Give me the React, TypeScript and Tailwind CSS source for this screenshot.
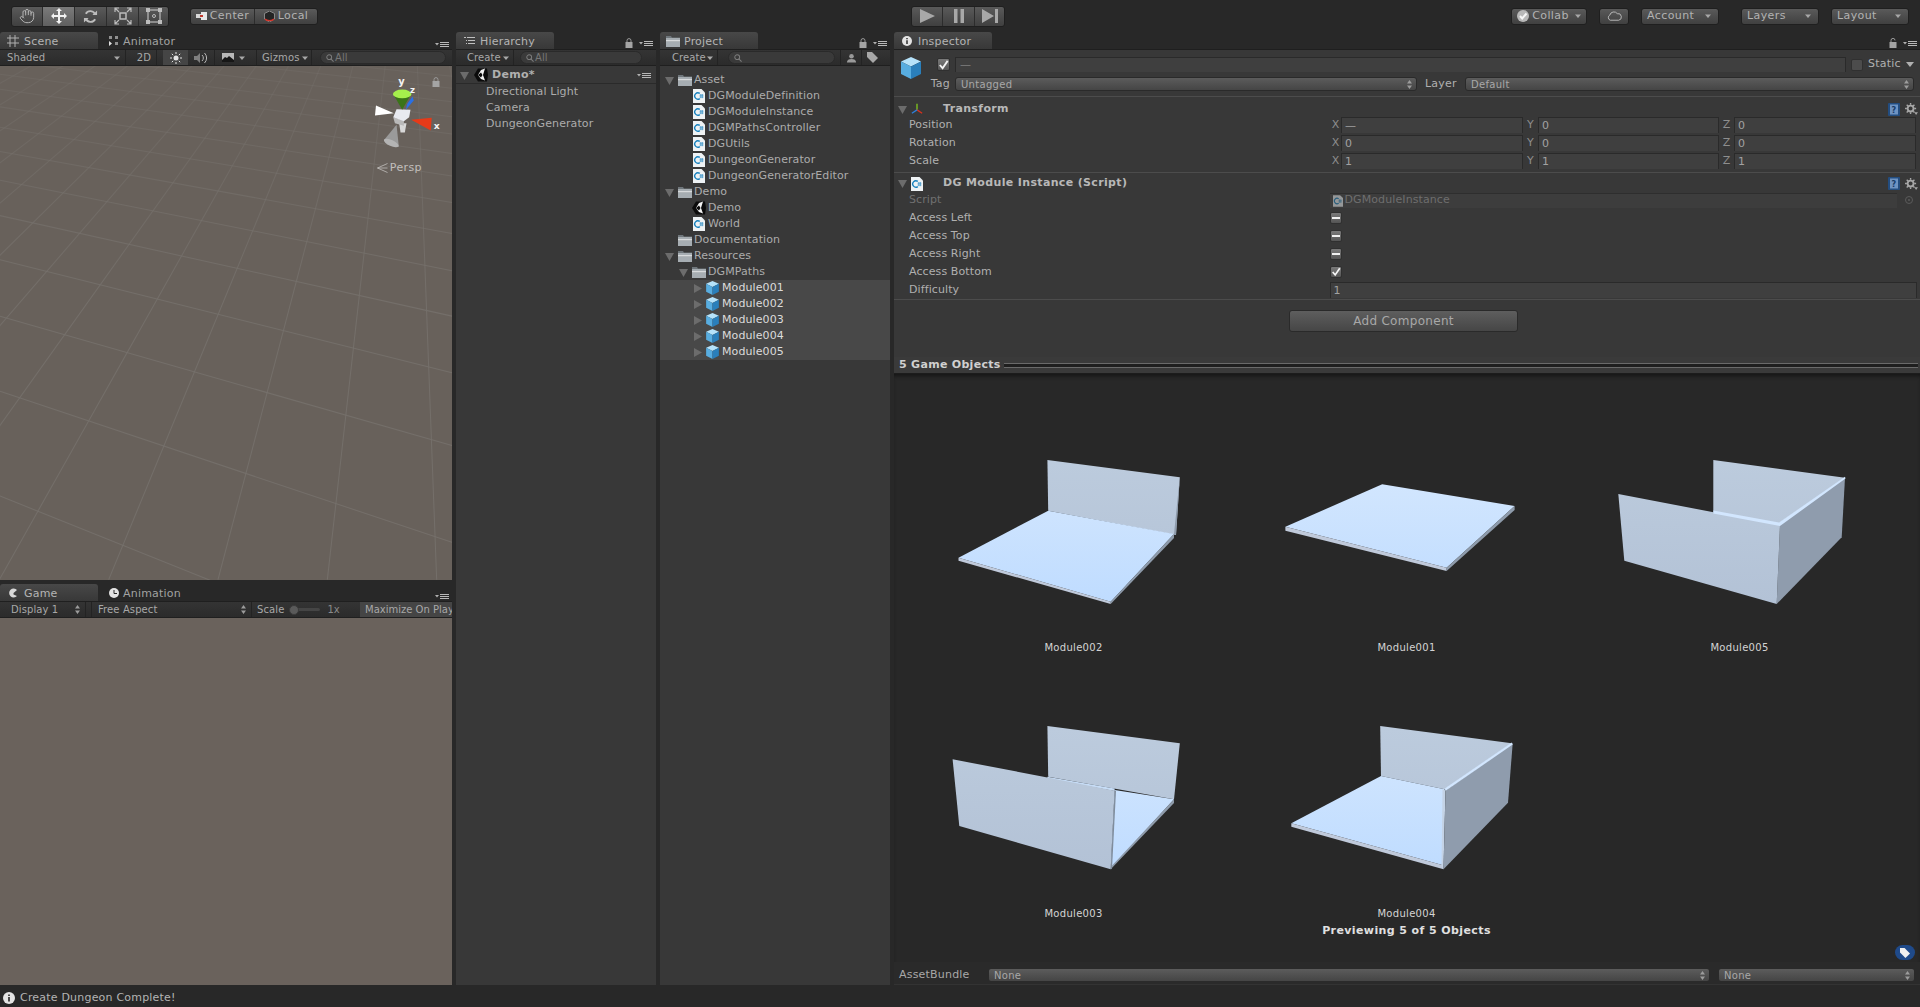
import type { ReactNode } from "react";
import { Hand } from "lucide-react";

const FONT = "font-['DejaVu_Sans',sans-serif]";

// scene grid, two vanishing points, drawn in a 3x space
const VP_A = { x: -4709, y: -572 };
const VP_B = { x: 1228, y: -617 };
const rowLines = Array.from({ length: 26 }, (_, j) => {
  const y0 = 1 / (0.000532 + 0.000105 * j) - 590;
  return { x1: 0, y1: y0, x2: 1356, y2: y0 + ((y0 - VP_A.y) / (0 - VP_A.x)) * 1356 };
});
const colLines = Array.from({ length: 30 }, (_, k) => ({
  x1: 1310 - 328 * (k - 1),
  y1: 1537,
  x2: VP_B.x,
  y2: VP_B.y,
}));

function Arrow({ className = "" }: { className?: string }) {
  return (
    <svg viewBox="0 0 6 4" className={`w-[6px] h-[4px] shrink-0 ${className}`}>
      <path d="M0 0.5h6L3 4z" fill="#a8a8a8" />
    </svg>
  );
}

function UpDown() {
  return (
    <svg viewBox="0 0 5 9" className="w-[5px] h-[9px] shrink-0">
      <path d="M2.5 0L5 3.4H0zM2.5 9L0 5.6h5z" fill="#9c9c9c" />
    </svg>
  );
}

function Caret({ open = true }: { open?: boolean }) {
  return (
    <svg viewBox="0 0 9 9" className="w-[9px] h-[9px] shrink-0">
      <path d={open ? "M0 1h9L4.5 9z" : "M1 0l8 4.5L1 9z"} fill="#6c6c6c" />
    </svg>
  );
}

function MenuIcon() {
  return (
    <svg viewBox="0 0 14 7" className="w-[14px] h-[7px] shrink-0">
      <path d="M0 2h4L2 4.5z" fill="#b0b0b0" />
      <path d="M5 1h9v1H5zM5 3h9v1H5zM5 5h9v1H5z" fill="#b8b8b8" />
    </svg>
  );
}

function Lock({ open = false }: { open?: boolean }) {
  return (
    <svg viewBox="0 0 8 10" className="w-[8px] h-[10px] shrink-0">
      <path d={open ? "M2 4V2.4a2 2 0 0 1 4 0" : "M2 4V2.6a2 2 0 0 1 4 0V4"} fill="none" stroke="#9a9a9a" strokeWidth="1" />
      <rect x="0.5" y="4" width="7" height="6" fill="#a4a4a4" />
    </svg>
  );
}

function CsIcon({ dim = false }: { dim?: boolean }) {
  return (
    <svg viewBox="0 0 12 14" className={`shrink-0 ${dim ? "w-[10px] h-[12px] opacity-50" : "w-[12px] h-[14px]"}`}>
      <path d="M0 0h8.500L12 3.500V14H0z" fill="#eef2f4" />
      <path d="M6.800 4.400a3.200 3.200 0 1 0 0 5.200" fill="none" stroke="#1680bd" strokeWidth="1.400" />
      <path d="M6.500 6.200h4M6.500 8h4M7.800 5v4.200M9.300 5v4.200" stroke="#1680bd" strokeWidth="0.600" />
    </svg>
  );
}

function UnityLogo() {
  return (
    <svg viewBox="0 0 14 14" className="w-[14px] h-[14px] shrink-0">
      <path d="M0 7l4-6.500h9l1 6.500-1 6.500H4z" fill="#0b0b0b" />
      <path d="M4 7l3-5 4-1.500L9 7l2 5.500-4-1.500z" fill="#f2f2f2" />
      <path d="M4 7h4.500L7 4.500zM4 7h4.500L7 9.500z" fill="#0b0b0b" />
    </svg>
  );
}

function Folder() {
  return (
    <svg viewBox="0 0 14 12" className="w-[14px] h-[12px] shrink-0">
      <path d="M0 1h5l1 1.500h8V12H0z" fill="#6f767b" />
      <path d="M0 3h14v2H0zM0 6.500h14V12H0z" fill="#a6adb2" />
      <rect y="5" width="14" height="1.500" fill="#d7dadc" />
    </svg>
  );
}

function Cube({ className = "w-[13px] h-[14px]" }: { className?: string }) {
  return (
    <svg viewBox="0 0 20 22" className={`shrink-0 ${className}`}>
      <path d="M10 0l10 4.500-10 5-10-5z" fill="#b5e2fa" />
      <path d="M0 4.500l10 5V22L0 17z" fill="#58ade0" />
      <path d="M20 4.500l-10 5V22l10-5z" fill="#2a7fbb" />
    </svg>
  );
}

function Help() {
  return (
    <svg viewBox="0 0 12 13" className="w-[12px] h-[13px] shrink-0">
      <rect width="12" height="13" rx="1" fill="#234d80" />
      <rect x="2" y="1.500" width="8" height="10" fill="#6e93c2" />
      <text x="6" y="9.500" textAnchor="middle" fontSize="8" fontWeight="700" fill="#173c69" fontFamily="DejaVu Sans">?</text>
    </svg>
  );
}

function Gear() {
  return (
    <svg viewBox="0 0 14 13" className="w-[13px] h-[12px] shrink-0">
      <circle cx="6" cy="6" r="3.200" fill="none" stroke="#a8a8a8" strokeWidth="2" />
      <path d="M6 0v12M0 6h12M1.800 1.800l8.400 8.400M10.200 1.800l-8.400 8.400" stroke="#a8a8a8" strokeWidth="1.500" strokeDasharray="2 8" />
      <path d="M10 10h4l-2 3z" fill="#a8a8a8" />
    </svg>
  );
}

function Tab({ icon, label, active = false }: { icon: ReactNode; label: string; active?: boolean }) {
  return (
    <div
      className={`w-[98px] h-[17px] flex items-center rounded-t-[3px] text-[11px] tracking-[0.2px] ${
        active ? "bg-gradient-to-b from-[#484848] to-[#383838] text-[#b4b4b4] pl-[7px] gap-[5px]" : "text-[#a2a2a2] pl-[10px] gap-[3px]"
      }`}
    >
      <span className="w-[12px] flex justify-center">{icon}</span>
      <span className="pt-[3px]">{label}</span>
    </div>
  );
}

function TabRow({ children, lock = false, openLock = false }: { children: ReactNode; lock?: boolean; openLock?: boolean }) {
  return (
    <div className="h-[17px] flex items-end bg-[#282828] shrink-0">
      {children}
      <div className="ml-auto flex items-center gap-[6px] pr-[3px] pb-[1px]">
        {lock && <Lock open={openLock} />}
        <MenuIcon />
      </div>
    </div>
  );
}

function Strip({ children }: { children: ReactNode }) {
  return (
    <div className="h-[17px] shrink-0 flex items-center bg-gradient-to-b from-[#343434] to-[#2b2b2b] border-y border-[#1f1f1f] text-[10px] tracking-[0.1px] text-[#a8a8a8] overflow-hidden">
      {children}
    </div>
  );
}

function Search({ className, text }: { className: string; text?: string }) {
  return (
    <div className={`h-[13px] rounded-full bg-[#3a3a3a] border border-[#2a2a2a] flex items-center pl-[5px] gap-[1px] text-[#767676] text-[10px] ${className}`}>
      <svg viewBox="0 0 10 10" className="w-[8px] h-[8px] shrink-0">
        <circle cx="4" cy="4" r="3" fill="none" stroke="#7c7c7c" strokeWidth="1.300" />
        <path d="M6 6l3.500 3.500" stroke="#7c7c7c" strokeWidth="1.300" />
      </svg>
      {text && <span>{text}</span>}
    </div>
  );
}

function TreeRow({ depth, caret, icon, label, selected = false }: { depth: number; caret?: "open" | "closed"; icon: ReactNode; label: string; selected?: boolean }) {
  return (
    <div className={`h-[16px] flex items-center text-[11px] tracking-[0.1px] whitespace-nowrap ${selected ? "bg-[#484848] text-[#dcdcdc]" : "text-[#acacac]"}`}>
      <span className="w-[11px] flex justify-center shrink-0" style={{ marginLeft: depth * 14 + 4 }}>
        {caret && <Caret open={caret === "open"} />}
      </span>
      <span className="w-[17px] ml-[1px] flex justify-center shrink-0">{icon}</span>
      <span className="ml-[1px] pt-[1px]">{label}</span>
    </div>
  );
}

function TopButton({ children, className }: { children: ReactNode; className: string }) {
  return (
    <div className={`h-[17px] flex items-center rounded-[3px] border border-[#1f1f1f] bg-gradient-to-b from-[#5a5a5a] to-[#404040] text-[11px] tracking-[0.4px] text-[#b2b2b2] ${className}`}>
      {children}
    </div>
  );
}

function Vec({ axis, value, className }: { axis: string; value: string; className: string }) {
  return (
    <>
      <span className={`text-[#8e8e8e] text-center ${axis === "X" ? "w-[11px]" : "w-[15px]"}`}>{axis}</span>
      <div className={`h-[16px] border-t border-x border-[#2a2a2a] bg-[#3f3f3f] pl-[3px] leading-[15px] text-[#a2a2a2] ${className}`}>{value}</div>
    </>
  );
}

function VecRow({ label, x }: { label: string; x: string }) {
  const y = label === "Scale" ? "1" : "0";
  return (
    <div className="h-[18px] flex items-center pl-[15px] text-[11px] tracking-[0.1px] text-[#b0b0b0]">
      <span className="w-[421px]">{label}</span>
      <Vec axis="X" value={x} className="w-[182px]" />
      <Vec axis="Y" value={y} className="w-[181px]" />
      <Vec axis="Z" value={y} className="w-[182px]" />
    </div>
  );
}

function Toggle({ label, checked = false }: { label: string; checked?: boolean }) {
  return (
    <div className="h-[18px] flex items-center pl-[15px] text-[11px] tracking-[0.1px] text-[#b0b0b0]">
      <span className="w-[421px]">{label}</span>
      <div className="w-[12px] h-[12px] rounded-[2px] bg-gradient-to-b from-[#7a7a7a] to-[#555555] border border-[#303030] flex items-center justify-center">
        {checked ? (
          <svg viewBox="0 0 12 12" className="w-[12px] h-[12px]">
            <path d="M2 6l3 3.500L10.500 1.500" fill="none" stroke="#f4f4f4" strokeWidth="2" />
          </svg>
        ) : (
          <span className="w-[8px] h-[2px] bg-[#f0f0f0]" />
        )}
      </div>
    </div>
  );
}

function CompHeader({ icon, title, compact = false }: { icon: ReactNode; title: string; compact?: boolean }) {
  return (
    <div className={`flex items-center pl-[4px] pr-[2px] text-[11px] font-bold tracking-[0.35px] text-[#b8b8b8] ${compact ? "h-[18px] pt-[3px]" : "h-[19px] pt-[5px]"}`}>
      <Caret />
      <span className="w-[12px] ml-[4px] flex justify-center">{icon}</span>
      <span className="ml-[20px]">{title}</span>
      <span className="ml-auto flex items-center gap-[5px]">
        <Help />
        <Gear />
      </span>
    </div>
  );
}

function Select({ label, className }: { label: string; className: string }) {
  return (
    <div className={`h-[14px] flex items-center justify-between rounded-[3px] border border-[#2a2a2a] bg-gradient-to-b from-[#5c5c5c] to-[#454545] pl-[5px] pr-[4px] text-[10px] tracking-[0.3px] text-[#a8a8a8] ${className}`}>
      <span>{label}</span>
      <UpDown />
    </div>
  );
}

const FLOOR = "url(#floor)";
const WALL = "url(#wall)";

function Shape({ n }: { n: 1 | 2 | 3 | 4 | 5 }) {
  return (
    <svg viewBox="0 9 333 248" className="w-[333px] h-[248px] block">
      <defs>
        <linearGradient id="floor" gradientUnits="userSpaceOnUse" x1="0" y1="100" x2="0" y2="220">
          <stop offset="0" stopColor="#d2e6fe" />
          <stop offset="1" stopColor="#bfdcff" />
        </linearGradient>
        <linearGradient id="wall" gradientUnits="userSpaceOnUse" x1="0" y1="80" x2="0" y2="220">
          <stop offset="0" stopColor="#bccbdd" />
          <stop offset="1" stopColor="#b3c2d6" />
        </linearGradient>
      </defs>
      {n === 1 && (
        <>
          <polygon points="142.200,102.300 274.600,124 206.600,185.700 45.400,144.700" fill={FLOOR} />
          <polygon points="45.400,144.700 206.600,185.700 206.600,189 45.400,148.700" fill="#c0cadb" />
          <polygon points="274.600,124 274.600,128 206.600,189 206.600,185.700" fill="#8e9bab" />
        </>
      )}
      {n === 2 && (
        <>
          <polygon points="140.400,78 272.800,95.300 269,153 141.200,128.700" fill={WALL} />
          <polygon points="272.800,95.300 269,153 267,152" fill="#8e9bab" />
          <polygon points="141.200,128.700 267,152 203.700,219.700 51.500,175.700" fill={FLOOR} />
          <polygon points="51.500,175.700 203.700,219.700 203.700,222 51.500,178.700" fill="#c0cadb" />
          <polygon points="267,152 267,156 203.700,222 203.700,219.700" fill="#8e9bab" />
        </>
      )}
      {n === 3 && (
        <>
          <polygon points="140.400,78 272.800,95.300 267,151.300 141.200,128.700" fill={WALL} />
          <polygon points="207.600,142 267,151.300 203.700,220.300" fill={FLOOR} />
          <polygon points="267,151.300 267,155 203.700,221.300 203.700,219" fill="#8e9bab" />
          <polygon points="140.400,128.700 207.600,140.500 207.600,143 140.400,131" fill="#c6dcf6" />
          <polygon points="45.600,111.300 140.400,129.500 207.600,142.700 203.700,221.300 52.300,178" fill={WALL} />
          <polygon points="207.600,142.700 209,142.700 205,221 203.700,221.300" fill="#7f8c9c" />
        </>
      )}
      {n === 4 && (
        <>
          <polygon points="140.200,78 271.800,95.300 204.700,141.300 141,128" fill={WALL} />
          <polygon points="141,128 204.700,141.300 202.300,217 51.300,175.300" fill={FLOOR} />
          <polygon points="51.300,175.300 202.300,217 203.500,221.300 51.300,178.700" fill="#c0cadb" />
          <polygon points="202.500,141 205.500,142.700 203.500,221.300 201.500,218" fill="#c4d3e6" />
          <polygon points="205.500,142.700 272.700,95.300 268,154.700 203.500,221.300" fill="#8f9cad" />
          <polygon points="204.700,140.500 271.800,94.500 272.700,96.500 205.500,143" fill="#d2e6fe" />
        </>
      )}
      {n === 5 && (
        <>
          <polygon points="140.300,78 272,95.700 206,141.300 140.300,129.700" fill={WALL} />
          <polygon points="207,143 272,95.700 268.700,155.300 203.700,222" fill="#8f9cad" />
          <polygon points="45.300,112 207,143 203.700,222 51.300,178.700" fill={WALL} />
          <polygon points="140.300,128.500 206,140.500 272,94.800 272.500,96.500 207,144 140.300,131.500" fill="#d2e6fe" />
        </>
      )}
    </svg>
  );
}

function Preview({ n, name }: { n: 1 | 2 | 3 | 4 | 5; name: string }) {
  return (
    <div className="h-[266px]">
      <Shape n={n} />
      <div className="h-[16px] flex items-center justify-center text-[10px] tracking-[0.3px] text-[#d4d4d4]">{name}</div>
    </div>
  );
}

function Gizmo() {
  return (
    <svg viewBox="60 40 220 260" className="absolute top-[7px] right-[9px] w-[73px] h-[87px]">
      <polygon points="140,195 103,240 147,262" fill="#9a9a9a" />
      <ellipse cx="124" cy="250" rx="24" ry="9" transform="rotate(24 124 250)" fill="#b4b4b4" />
      <polygon points="148,190 170,190 165,218 152,218" fill="#d8d8d8" />
      <polygon points="130,172 162,182 162,198 135,190" fill="#b9b9b9" />
      <polygon points="140,148 182,150 178,172 162,184 130,172" fill="#e8eaf0" />
      <polygon points="78,137 132,160 75,167" fill="#ffffff" />
      <polygon points="172,132 188,110 192,122 168,150" fill="#2a70e4" />
      <polygon points="132,106 182,106 157,150" fill="#3a7418" />
      <ellipse cx="157" cy="102" rx="28" ry="13" fill="#a6f04c" />
      <polygon points="184,180 246,174 243,212" fill="#e63a18" />
      <text x="155" y="76" textAnchor="middle" fontSize="30" fontWeight="700" fill="#f4f4f4" fontFamily="DejaVu Sans">y</text>
      <text x="188" y="100" textAnchor="middle" fontSize="26" fontWeight="700" fill="#f4f4f4" fontFamily="DejaVu Sans">z</text>
      <text x="261" y="207" textAnchor="middle" fontSize="28" fontWeight="700" fill="#f4f4f4" fontFamily="DejaVu Sans">x</text>
    </svg>
  );
}

export default function App() {
  return (
    <div className={`w-[1920px] h-[1007px] flex flex-col bg-[#282828] overflow-hidden ${FONT}`}>
      {/* top toolbar */}
      <div className="h-[32px] shrink-0 flex items-center pl-[11px] pr-[11px]">
        <div className="flex w-[158px] h-[21px] rounded-[3px] border border-[#1f1f1f] overflow-hidden bg-gradient-to-b from-[#5a5a5a] to-[#404040]">
          <div className="w-[31px] flex items-center justify-center border-r border-[#2c2c2c]">
            <Hand size={16} color="#b4b4b4" strokeWidth={1.500} />
          </div>
          <div className="w-[32px] flex items-center justify-center border-r border-[#2c2c2c] bg-gradient-to-b from-[#7a7a7a] to-[#606060]">
            <svg viewBox="0 0 16 16" className="w-[16px] h-[16px]">
              <path d="M8 0l3 3H9v4h4V5l3 3-3 3V9H9v4h2l-3 3-3-3h2V9H3v2L0 8l3-3v2h4V3H5z" fill="#f2f2f2" />
            </svg>
          </div>
          <div className="w-[32px] flex items-center justify-center border-r border-[#2c2c2c]">
            <svg viewBox="0 0 16 16" className="w-[15px] h-[15px]">
              <path d="M13 6a5.500 5.500 0 0 0-10-1M3 10a5.500 5.500 0 0 0 10 1" fill="none" stroke="#bcbcbc" strokeWidth="2" />
              <path d="M10 6.500h5V1.500zM6 9.500H1v5z" fill="#bcbcbc" />
            </svg>
          </div>
          <div className="w-[32px] flex items-center justify-center border-r border-[#2c2c2c]">
            <svg viewBox="0 0 18 18" className="w-[18px] h-[18px]">
              <rect x="6" y="6" width="6" height="6" fill="none" stroke="#bcbcbc" strokeWidth="1.500" />
              <path d="M1 5V1h4M13 1h4v4M17 13v4h-4M5 17H1v-4M1.500 1.500L5 5M16.500 1.500L13 5M16.500 16.500L13 13M1.500 16.500L5 13" fill="none" stroke="#bcbcbc" strokeWidth="1.200" />
            </svg>
          </div>
          <div className="flex-1 flex items-center justify-center">
            <svg viewBox="0 0 16 16" className="w-[16px] h-[16px]">
              <rect x="2" y="2" width="12" height="12" fill="none" stroke="#bcbcbc" strokeWidth="1.200" />
              <path d="M0 0h4v4H0zM12 0h4v4h-4zM0 12h4v4H0zM12 12h4v4h-4z" fill="#bcbcbc" />
              <circle cx="8" cy="8" r="1.500" fill="none" stroke="#bcbcbc" />
            </svg>
          </div>
        </div>

        <TopButton className="ml-[21px] w-[128px]">
          <div className="w-[64px] flex items-center justify-center gap-[3px] border-r border-[#2c2c2c] h-full">
            <svg viewBox="0 0 11 8" className="w-[11px] h-[8px]">
              <rect y="2" width="5" height="4" fill="#d8d8d8" />
              <rect x="5" width="6" height="8" fill="#e8e8e8" />
              <rect x="4" y="3" width="3" height="2" fill="#c4392c" />
            </svg>
            <span>Center</span>
          </div>
          <div className="flex-1 flex items-center justify-center gap-[3px]">
            <svg viewBox="0 0 11 11" className="w-[11px] h-[11px]">
              <path d="M5.500 0L10.500 2.500V8L5.500 11 .5 8V2.500z" fill="#242424" stroke="#9a9a9a" strokeWidth="0.800" />
              <path d="M1 8a5 3 0 0 0 9 0" fill="none" stroke="#d0362c" strokeWidth="1.200" />
            </svg>
            <span>Local</span>
          </div>
        </TopButton>

        <div className="ml-[593px] flex w-[94px] h-[21px] rounded-[3px] border border-[#1f1f1f] overflow-hidden bg-gradient-to-b from-[#5a5a5a] to-[#404040]">
          <div className="w-[31px] flex items-center justify-center border-r border-[#2c2c2c]">
            <svg viewBox="0 0 15 14" className="w-[15px] h-[14px]"><path d="M0 0l15 7-15 7z" fill="#a8a8a8" /></svg>
          </div>
          <div className="w-[32px] flex items-center justify-center border-r border-[#2c2c2c]">
            <svg viewBox="0 0 10 14" className="w-[10px] h-[14px]"><path d="M0 0h3.500v14H0zM6.500 0H10v14H6.500z" fill="#a8a8a8" /></svg>
          </div>
          <div className="flex-1 flex items-center justify-center">
            <svg viewBox="0 0 16 14" className="w-[16px] h-[14px]"><path d="M0 0l12 7-12 7zM13 0h3v14h-3z" fill="#a8a8a8" /></svg>
          </div>
        </div>

        <TopButton className="ml-auto w-[76px] justify-center gap-[3px]">
          <svg viewBox="0 0 12 12" className="w-[12px] h-[12px]">
            <circle cx="6" cy="6" r="6" fill="#b8b8b8" />
            <path d="M3 6l2.200 2.500L9.500 3.500" fill="none" stroke="#f6f6f6" strokeWidth="2" />
          </svg>
          <span>Collab</span>
          <Arrow className="ml-[3px]" />
        </TopButton>
        <TopButton className="ml-[12px] w-[30px] justify-center">
          <svg viewBox="0 0 16 10" className="w-[15px] h-[10px]">
            <path d="M3.500 9.500a3 3 0 0 1-.5-5.500 4.500 4.500 0 0 1 8-1.500 3.500 3.500 0 0 1 1.500 7z" fill="none" stroke="#bcbcbc" />
          </svg>
        </TopButton>
        <TopButton className="ml-[12px] w-[78px] justify-between pl-[5px] pr-[7px]">
          <span>Account</span>
          <Arrow />
        </TopButton>
        <TopButton className="ml-[22px] w-[78px] justify-between pl-[5px] pr-[7px]">
          <span>Layers</span>
          <Arrow />
        </TopButton>
        <TopButton className="ml-[12px] w-[78px] justify-between pl-[5px] pr-[7px]">
          <span>Layout</span>
          <Arrow />
        </TopButton>
      </div>

      <div className="flex-1 min-h-0 flex gap-[4px]">
        {/* scene and game */}
        <div className="w-[452px] flex flex-col">
          <TabRow>
            <Tab
              active
              label="Scene"
              icon={
                <svg viewBox="0 0 12 12" className="w-[12px] h-[12px]">
                  <path d="M3 0v12M8 0v12M0 3h12M0 8h12" stroke="#b0b0b0" />
                </svg>
              }
            />
            <Tab
              label="Animator"
              icon={
                <svg viewBox="0 0 10 10" className="w-[10px] h-[10px]">
                  <path d="M0 0h3v3H0zM6 0h3v3H6zM6 6h3v3H6z" fill="#909090" />
                  <path d="M0 5l3 2.500L0 10z" fill="#e0e0e0" />
                </svg>
              }
            />
          </TabRow>
          <Strip>
            <div className="w-[126px] pl-[7px] pr-[5px] flex items-center justify-between border-r border-[#232323] h-full">
              <span>Shaded</span>
              <Arrow />
            </div>
            <div className="w-[31px] text-center pl-[6px] border-r border-[#232323] h-full leading-[15px]">2D</div>
            <div className="w-[25px] ml-[6px] h-full bg-[#454545] flex items-center justify-center">
              <svg viewBox="0 0 12 12" className="w-[12px] h-[12px]">
                <circle cx="6" cy="6" r="2.500" fill="#e4e4e4" />
                <path d="M6 0v2M6 10v2M0 6h2M10 6h2M1.800 1.800l1.400 1.400M8.800 8.800l1.400 1.400M10.200 1.800L8.800 3.200M3.200 8.800l-1.400 1.400" stroke="#e4e4e4" />
              </svg>
            </div>
            <div className="w-[27px] h-full flex items-center justify-center border-r border-[#232323]">
              <svg viewBox="0 0 14 12" className="w-[14px] h-[12px]">
                <path d="M0 4h3l3-3v10L3 8H0z" fill="#7e7e7e" />
                <path d="M8 3a4 4 0 0 1 0 6M10.500 1a7 7 0 0 1 0 10" fill="none" stroke="#b8b8b8" />
              </svg>
            </div>
            <div className="w-[42px] h-full flex items-center pl-[7px] gap-[5px] border-r border-[#232323]">
              <svg viewBox="0 0 12 9" className="w-[12px] h-[9px]">
                <rect width="12" height="9" fill="#b8b8b8" />
                <path d="M0 9V7l3-3 2 1 2-2 5 4v2z" fill="#171717" />
              </svg>
              <Arrow />
            </div>
            <div className="w-[55px] h-full flex items-center justify-between pl-[5px] pr-[3px] border-r border-[#232323]">
              <span>Gizmos</span>
              <Arrow />
            </div>
            <Search className="ml-[8px] w-[126px]" text="All" />
          </Strip>
          <div className="h-[514px] shrink-0 relative bg-[#68615b] overflow-hidden">
            <svg viewBox="0 18 1356 1520" preserveAspectRatio="none" className="w-full h-full block">
              <defs>
                <linearGradient id="gridFade" gradientUnits="userSpaceOnUse" x1="0" y1="0" x2="0" y2="700">
                  <stop offset="0" stopColor="#75706b" stopOpacity="0.35" />
                  <stop offset="1" stopColor="#75706b" stopOpacity="0.9" />
                </linearGradient>
              </defs>
              {rowLines.map((l, i) => (
                <line key={i} {...l} stroke="url(#gridFade)" strokeWidth="3" />
              ))}
              {colLines.map((l, i) => (
                <line key={i} {...l} stroke="url(#gridFade)" strokeWidth="3" />
              ))}
            </svg>
            <Gizmo />
            <div className="absolute top-[11px] right-[12px]">
              <Lock />
            </div>
            <div className="absolute top-[94px] right-[30px] flex items-center gap-[2px] text-[11px] tracking-[0.4px] text-[#c2bfbc]">
              <svg viewBox="0 0 11 10" className="w-[11px] h-[10px]">
                <path d="M10.500 0.500L0.500 5l10 4.500M10.500 5H0.500" fill="none" stroke="#c2bfbc" strokeWidth="0.800" />
              </svg>
              <span>Persp</span>
            </div>
          </div>
          <div className="h-[4px] shrink-0" />
          <TabRow>
            <Tab
              active
              label="Game"
              icon={
                <svg viewBox="0 0 10 10" className="w-[10px] h-[10px]">
                  <path d="M9 2a4.500 4.500 0 1 0 0 6L5.500 6.500V5z" fill="#d8d8d8" />
                </svg>
              }
            />
            <Tab
              label="Animation"
              icon={
                <svg viewBox="0 0 10 10" className="w-[10px] h-[10px]">
                  <circle cx="5" cy="5" r="5" fill="#e4e4e4" />
                  <path d="M5 2v3.500h3" fill="none" stroke="#282828" />
                </svg>
              }
            />
          </TabRow>
          <Strip>
            <div className="w-[86px] h-full pl-[11px] pr-[5px] flex items-center justify-between border-r border-[#232323]">
              <span>Display 1</span>
              <UpDown />
            </div>
            <div className="w-[161px] ml-[5px] h-full pl-[6px] pr-[5px] flex items-center justify-between border-x border-[#232323]">
              <span>Free Aspect</span>
              <UpDown />
            </div>
            <span className="ml-[5px]">Scale</span>
            <div className="ml-[5px] relative w-[31px] flex items-center">
              <div className="w-full h-[3px] rounded-full bg-[#454545]" />
              <div className="absolute left-0 w-[10px] h-[10px] rounded-full bg-[#5a5a5a] border border-[#3a3a3a]" />
            </div>
            <span className="ml-[7px] text-[#8a8a8a]">1x</span>
            <div className="ml-auto w-[92px] h-full pl-[5px] bg-[#454545] whitespace-nowrap overflow-hidden leading-[15px] tracking-[0]">Maximize On Play</div>
          </Strip>
          <div className="flex-1 bg-[#6a625c]" />
        </div>

        {/* hierarchy */}
        <div className="w-[200px] flex flex-col bg-[#383838]">
          <TabRow lock>
            <Tab
              active
              label="Hierarchy"
              icon={
                <svg viewBox="0 0 11 8" className="w-[11px] h-[8px]">
                  <path d="M0 0h2v1H0zM3 0h8v1H3zM2 3h1v1H2zM4 3h7v1H4zM2 6h1v1H2zM4 6h7v1H4z" fill="#c0c0c0" />
                </svg>
              }
            />
          </TabRow>
          <Strip>
            <div className="w-[58px] h-full pl-[11px] pr-[4px] flex items-center justify-between border-r border-[#232323]">
              <span>Create</span>
              <Arrow />
            </div>
            <Search className="ml-[6px] w-[122px]" text="All" />
          </Strip>
          <div className="h-[18px] pt-[1px] flex items-center pl-[4px] pr-[5px] border-b border-[#2a2a2a] text-[11px] font-bold tracking-[0.3px] text-[#b0b0b0]">
            <Caret />
            <span className="ml-[5px]"><UnityLogo /></span>
            <span className="ml-[4px]">Demo*</span>
            <span className="ml-auto"><MenuIcon /></span>
          </div>
          <div className="pl-[30px] text-[11px] tracking-[0.1px] text-[#acacac]">
            <div className="h-[16px] leading-[16px]">Directional Light</div>
            <div className="h-[16px] leading-[16px]">Camera</div>
            <div className="h-[16px] leading-[16px]">DungeonGenerator</div>
          </div>
        </div>

        {/* project */}
        <div className="w-[230px] flex flex-col bg-[#383838]">
          <TabRow lock>
            <Tab active label="Project" icon={<Folder />} />
          </TabRow>
          <Strip>
            <div className="w-[58px] h-full pl-[12px] pr-[4px] flex items-center justify-between border-r border-[#232323]">
              <span>Create</span>
              <Arrow />
            </div>
            <Search className="ml-[10px] w-[107px]" />
            <div className="ml-[5px] w-[22px] h-full border-x border-[#232323] flex items-center justify-center">
              <svg viewBox="0 0 12 10" className="w-[11px] h-[10px]">
                <circle cx="6" cy="3" r="2.500" fill="#9a9a9a" />
                <path d="M1 10c0-3 2-4 5-4s5 1 5 4z" fill="#9a9a9a" />
              </svg>
            </div>
            <div className="w-[21px] flex items-center justify-center">
              <svg viewBox="0 0 11 11" className="w-[11px] h-[11px]">
                <path d="M0 0h5l6 6-5 5-6-6z" fill="#a8a8a8" />
              </svg>
            </div>
          </Strip>
          <div className="pt-[6px]">
            <TreeRow depth={0} caret="open" icon={<Folder />} label="Asset" />
            <TreeRow depth={1} icon={<CsIcon />} label="DGModuleDefinition" />
            <TreeRow depth={1} icon={<CsIcon />} label="DGModuleInstance" />
            <TreeRow depth={1} icon={<CsIcon />} label="DGMPathsController" />
            <TreeRow depth={1} icon={<CsIcon />} label="DGUtils" />
            <TreeRow depth={1} icon={<CsIcon />} label="DungeonGenerator" />
            <TreeRow depth={1} icon={<CsIcon />} label="DungeonGeneratorEditor" />
            <TreeRow depth={0} caret="open" icon={<Folder />} label="Demo" />
            <TreeRow depth={1} icon={<UnityLogo />} label="Demo" />
            <TreeRow depth={1} icon={<CsIcon />} label="World" />
            <TreeRow depth={0} icon={<Folder />} label="Documentation" />
            <TreeRow depth={0} caret="open" icon={<Folder />} label="Resources" />
            <TreeRow depth={1} caret="open" icon={<Folder />} label="DGMPaths" />
            <TreeRow depth={2} selected caret="closed" icon={<Cube />} label="Module001" />
            <TreeRow depth={2} selected caret="closed" icon={<Cube />} label="Module002" />
            <TreeRow depth={2} selected caret="closed" icon={<Cube />} label="Module003" />
            <TreeRow depth={2} selected caret="closed" icon={<Cube />} label="Module004" />
            <TreeRow depth={2} selected caret="closed" icon={<Cube />} label="Module005" />
          </div>
        </div>

        {/* inspector */}
        <div className="flex-1 min-w-0 flex flex-col bg-[#383838]">
          <TabRow lock openLock>
            <Tab
              active
              label="Inspector"
              icon={
                <svg viewBox="0 0 10 10" className="w-[10px] h-[10px]">
                  <circle cx="5" cy="5" r="5" fill="#e4e4e4" />
                  <path d="M4.300 2h1.400v1.300H4.300zM4.300 4.200h1.400V8H4.300z" fill="#222222" />
                </svg>
              }
            />
          </TabRow>
          <div className="h-[48px] shrink-0 border-t border-[#1f1f1f] border-b border-b-[#4c4c4c] flex flex-col text-[11px] tracking-[0.2px] text-[#b0b0b0]">
            <div className="h-[15px] mt-[7px] flex items-center pl-[7px]">
              <Cube className="w-[20px] h-[22px] mt-[6px]" />
              <div className="ml-[16px] w-[13px] h-[13px] rounded-[2px] bg-gradient-to-b from-[#7a7a7a] to-[#555555] border border-[#303030] flex items-center justify-center">
                <svg viewBox="0 0 12 12" className="w-[12px] h-[12px]">
                  <path d="M2 6l3 3.500L10.500 1.500" fill="none" stroke="#f4f4f4" strokeWidth="2" />
                </svg>
              </div>
              <div className="ml-[5px] w-[891px] h-[15px] border-t border-x border-[#2a2a2a] bg-[#3f3f3f] pl-[4px] leading-[13px] text-[#808080]">—</div>
              <div className="ml-[5px] w-[12px] h-[12px] rounded-[2px] bg-[#4c4c4c] border border-[#303030]" />
              <span className="ml-[5px]">Static</span>
              <svg viewBox="0 0 8 5" className="ml-[5px] w-[8px] h-[5px]"><path d="M0 0h8L4 5z" fill="#b0b0b0" /></svg>
            </div>
            <div className="h-[14px] mt-[5px] flex items-center">
              <span className="w-[56px] text-right">Tag</span>
              <Select label="Untagged" className="ml-[5px] w-[462px]" />
              <span className="ml-[8px] w-[40px]">Layer</span>
              <Select label="Default" className="w-[449px]" />
            </div>
          </div>

          <div className="h-[76px] shrink-0 border-b border-[#4c4c4c]">
            <CompHeader
              title="Transform"
              icon={
                <svg viewBox="0 0 14 12" className="w-[13px] h-[12px]">
                  <path d="M7 7V0" stroke="#7fc21f" strokeWidth="1.600" />
                  <path d="M7 7l6 4" stroke="#d8301e" strokeWidth="1.600" />
                  <path d="M7 7l-6 4" stroke="#2e7fd8" strokeWidth="1.600" />
                </svg>
              }
            />
            <VecRow label="Position" x="—" />
            <VecRow label="Rotation" x="0" />
            <VecRow label="Scale" x="1" />
          </div>

          <div className="h-[127px] shrink-0 border-b border-[#4c4c4c]">
            <CompHeader compact title="DG Module Instance (Script)" icon={<CsIcon />} />
            <div className="h-[18px] flex items-center pl-[15px] text-[11px] tracking-[0.1px] text-[#707070]">
              <span className="w-[420.500px]">Script</span>
              <div className="w-[567px] h-[15px] bg-[#3d3d3d] border-t border-[#2e2e2e] flex items-center gap-[2px] pl-[3px] text-[#6e6e6e]">
                <CsIcon dim />
                <span>DGModuleInstance</span>
              </div>
              <svg viewBox="0 0 8 8" className="ml-[8px] w-[8px] h-[8px]">
                <circle cx="4" cy="4" r="3.500" fill="none" stroke="#5a5a5a" />
                <circle cx="4" cy="4" r="1" fill="#5a5a5a" />
              </svg>
            </div>
            <Toggle label="Access Left" />
            <Toggle label="Access Top" />
            <Toggle label="Access Right" />
            <Toggle label="Access Bottom" checked />
            <div className="h-[18px] flex items-center pl-[15px] text-[11px] tracking-[0.1px] text-[#b0b0b0]">
              <span className="w-[420.500px]">Difficulty</span>
              <div className="w-[587px] h-[16px] border-t border-x border-[#2a2a2a] bg-[#3f3f3f] pl-[3px] leading-[15px] text-[#a2a2a2]">1</div>
            </div>
          </div>

          <div className="h-[57px] shrink-0 pt-[10px] pr-[7px] flex justify-center">
            <div className="w-[229px] h-[22px] rounded-[3px] border border-[#2a2a2a] bg-gradient-to-b from-[#5e5e5e] to-[#464646] flex items-center justify-center text-[12px] tracking-[0.3px] text-[#a8a8a8]">
              Add Component
            </div>
          </div>

          <div className="h-[17px] shrink-0 flex items-center pl-[5px] pr-[2px] gap-[3px] bg-[#3a3a3a] border-b border-[#1c1c1c] text-[11px] font-bold tracking-[0.3px] text-[#d0d0d0]">
            <span className="whitespace-nowrap">5 Game Objects</span>
            <div className="flex-1 h-[5px] border-y border-[#6a6a6a] bg-[#1f1f1f]" />
          </div>

          <div className="flex-1 min-h-0 relative bg-[#282828] pt-[17px] pl-[13px] shadow-[inset_0_4px_4px_-2px_#151515]">
            <div className="grid grid-cols-[333px_333px_333px]">
              <Preview n={2} name="Module002" />
              <Preview n={1} name="Module001" />
              <Preview n={5} name="Module005" />
              <Preview n={3} name="Module003" />
              <Preview n={4} name="Module004" />
            </div>
            <div className="w-[999px] h-[16px] leading-[16px] text-center text-[11px] font-bold tracking-[0.4px] text-[#e0e0e0]">
              Previewing 5 of 5 Objects
            </div>
            <div className="absolute right-[5px] bottom-[2px] w-[20px] h-[15px] rounded-full bg-[#1f4a8a] flex items-center justify-center">
              <svg viewBox="0 0 11 11" className="w-[10px] h-[10px]">
                <path d="M0 0h5l6 6-5 5-6-6z" fill="#f0f0f0" />
              </svg>
            </div>
          </div>

          <div className="h-[23px] shrink-0 pt-[4px] bg-[#2a2a2a] border-b border-[#333333] flex items-center text-[11px] tracking-[0.2px] text-[#a8a8a8]">
            <span className="w-[94px] pl-[5px]">AssetBundle</span>
            <Select label="None" className="w-[722px]" />
            <Select label="None" className="ml-[8px] w-[197px]" />
          </div>
        </div>
      </div>

      {/* status bar */}
      <div className="h-[22px] shrink-0 pt-[3px] flex items-center pl-[3px] gap-[5px] text-[11px] tracking-[0.2px] text-[#b4b4b4]">
        <svg viewBox="0 0 12 12" className="w-[12px] h-[12px]">
          <circle cx="6" cy="6" r="6" fill="#e4e4e4" />
          <path d="M5.200 2.500h1.600V4H5.200zM5.200 5h1.600v4.500H5.200z" fill="#222222" />
        </svg>
        <span className="pt-[1px]">Create Dungeon Complete!</span>
      </div>
    </div>
  );
}
